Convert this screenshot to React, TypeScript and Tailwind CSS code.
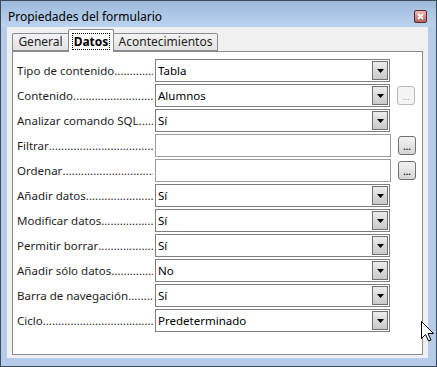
import React from 'react';

type Row = {
  label: string;
  kind: 'combo' | 'text';
  value?: string;
  button?: 'on' | 'off';
};

const rows: Row[] = [
  { label: 'Tipo de contenido', kind: 'combo', value: 'Tabla' },
  { label: 'Contenido', kind: 'combo', value: 'Alumnos', button: 'off' },
  { label: 'Analizar comando SQL', kind: 'combo', value: 'Sí' },
  { label: 'Filtrar', kind: 'text', button: 'on' },
  { label: 'Ordenar', kind: 'text', button: 'on' },
  { label: 'Añadir datos', kind: 'combo', value: 'Sí' },
  { label: 'Modificar datos', kind: 'combo', value: 'Sí' },
  { label: 'Permitir borrar', kind: 'combo', value: 'Sí' },
  { label: 'Añadir sólo datos', kind: 'combo', value: 'No' },
  { label: 'Barra de navegación', kind: 'combo', value: 'Sí' },
  { label: 'Ciclo', kind: 'combo', value: 'Predeterminado' },
];

const DOTS = '.'.repeat(80);

function DropArrow() {
  return (
    <div className="m-[1px] w-[16px] flex items-center justify-center border border-[#707070] bg-gradient-to-b from-[#ececec] to-[#c9c9c9]">
      <svg width="7" height="4" viewBox="0 0 7 4">
        <path d="M0 0H7L3.5 4Z" fill="#000" />
      </svg>
    </div>
  );
}

function DotsButton({ enabled }: { enabled: boolean }) {
  return (
    <div
      className={
        enabled
          ? 'ml-[7px] w-[18px] h-[19px] rounded-[3px] border border-[#707070] bg-gradient-to-b from-[#f4f4f4] to-[#d4d4d4] flex items-end justify-center pb-[3px] text-[9px] leading-none font-bold text-[#202020]'
          : 'ml-[7px] w-[18px] h-[19px] rounded-[3px] border border-[#b5b9bc] bg-[#f4f4f4] flex items-end justify-center pb-[3px] text-[9px] leading-none text-[#a8a8a8]'
      }
    >
      ...
    </div>
  );
}

function FieldRow({ row }: { row: Row }) {
  return (
    <div className="flex items-center h-[23px]">
      <div className="w-[136px] flex whitespace-nowrap text-[#1e1e1e]">
        <span className="shrink-0">{row.label}</span>
        <span className="min-w-0 overflow-hidden">{DOTS}</span>
      </div>
      {row.kind === 'combo' ? (
        <div className="ml-[2px] w-[235px] h-[23px] flex border border-[#7f7f7f] bg-white">
          <div className="flex-1 pl-[2px] flex items-center text-black">{row.value}</div>
          <DropArrow />
        </div>
      ) : (
        <div className="ml-[2px] w-[236px] h-[23px] border border-[#9c9c9c] bg-white" />
      )}
      {row.button && <DotsButton enabled={row.button === 'on'} />}
    </div>
  );
}

function Cursor() {
  return (
    <svg className="absolute left-[420px] top-[320px]" width="13" height="21" viewBox="0 0 13 21">
      <path
        d="M0.5 0.5V17.5L4.5 13.5L7.5 20L10 19L7 12.5H12.5Z"
        fill="#fff"
        stroke="#000"
        strokeWidth="1"
        strokeLinejoin="round"
      />
    </svg>
  );
}

export default function App() {
  return (
    <div
      className="relative w-[437px] h-[367px] border border-[#3e4b5a] bg-[#b4cce9] flex flex-col text-[11.5px] overflow-hidden"
      style={{ fontFamily: '"Noto Sans", "Open Sans", sans-serif' }}
    >
      {/* Title bar */}
      <div className="h-[26px] pt-[5px] pl-[7px] pr-[9px] flex items-center justify-between bg-gradient-to-b from-[#9dbadc] to-[#bcd3ee]">
        <span className="text-black text-[12px]">Propiedades del formulario</span>
        <div className="w-[13px] h-[13px] rounded-[2px] border border-[#5e2a2a] bg-gradient-to-b from-[#e7b9b6] to-[#b5615d] flex items-center justify-center">
          <svg width="7" height="7" viewBox="0 0 7 7">
            <path d="M1 1L6 6M6 1L1 6" stroke="#fff" strokeWidth="1.8" />
          </svg>
        </div>
      </div>

      {/* Client area */}
      <div className="flex-1 flex pl-[6px] pr-[8px] pb-[8px]">
        <div className="flex-1 bg-[#f0f0f0] px-[5px] pt-[2px] pb-[3px] flex flex-col">
          <div className="relative z-10 flex items-end h-[23px]">
            <div className="mb-px h-[18px] w-[56px] border border-r-0 border-[#898c95] rounded-tl-[2px] bg-gradient-to-b from-[#f3f3f3] to-[#e2e2e2] flex items-center justify-center text-[#1e1e1e] text-[12px]">
              General
            </div>
            <div className="h-[23px] w-[46px] border border-b-0 border-[#898c95] rounded-t-[2px] bg-white flex items-center justify-center">
              <span className="font-bold text-black text-[12px] outline-1 outline-dotted outline-[#000] px-[1px] leading-[15px]">Datos</span>
            </div>
            <div className="mb-px h-[18px] w-[104px] border border-l-0 border-[#898c95] rounded-tr-[2px] bg-gradient-to-b from-[#f3f3f3] to-[#e2e2e2] flex items-center justify-center text-[#1e1e1e] text-[12px]">
              Acontecimientos
            </div>
          </div>
          <div className="-mt-px flex-1 border border-[#898c95] bg-white pt-[7px] pl-[4px] flex flex-col gap-[2px]">
            {rows.map((r, i) => (
              <FieldRow key={i} row={r} />
            ))}
          </div>
        </div>
      </div>

      <Cursor />
    </div>
  );
}
